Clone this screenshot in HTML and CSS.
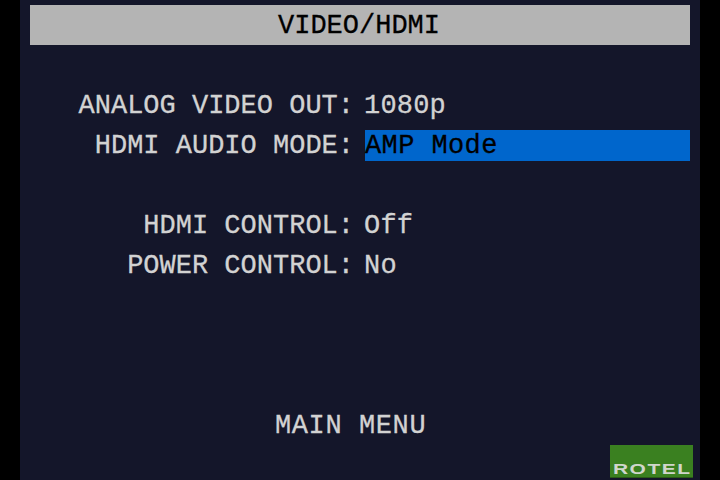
FILE: index.html
```html
<!DOCTYPE html>
<html lang="en">
<head>
    <meta charset="UTF-8">
    <title>VIDEO/HDMI</title>
    <link rel="stylesheet" href="styles.css">
</head>
<body>
    <div class="screen">
        <div class="title">VIDEO/HDMI</div>
        <div class="menu">
            <div class="row"><span class="label">ANALOG VIDEO OUT:</span><span class="value">1080p</span></div>
            <div class="row"><span class="label">HDMI AUDIO MODE:</span><span class="value selected">AMP Mode</span></div>
            <div class="row"></div>
            <div class="row"><span class="label">HDMI CONTROL:</span><span class="value">Off</span></div>
            <div class="row"><span class="label">POWER CONTROL:</span><span class="value">No</span></div>
        </div>
        <div class="main-menu">MAIN MENU</div>
        <div class="logo"><span class="logo-text">ROTEL</span></div>
    </div>
</body>
</html>
```
FILE: styles.css
```css
html, body {
    margin: 0;
    height: 100%;
    background: #000;
    overflow: hidden;
}

.screen {
    position: relative;
    box-sizing: border-box;
    width: 680px;
    height: 480px;
    margin-left: 20px;
    padding: 5px 10px 0;
    background: #14162a;
    color: #d2d2d2;
    font-family: "Liberation Mono", monospace;
    font-size: 27px;
    line-height: 42px;
    -webkit-text-stroke: 0.3px currentColor;
}

.title {
    height: 40px;
    padding-right: 2px;
    background: #b4b4b4;
    color: #000;
    text-align: center;
}

.menu {
    margin-top: 40px;
}

.row {
    display: grid;
    grid-template-columns: 324px 1fr;
    column-gap: 10px;
    height: 40px;
    white-space: nowrap;
}

.label {
    text-align: right;
}

.value {
    letter-spacing: 0.2px;
}

.selected {
    height: 31px;
    margin-top: 5px;
    margin-left: 1px;
    background: #0066cc;
    color: #000;
    line-height: 32px;
    letter-spacing: 0.4px;
}

.main-menu {
    margin-top: 120px;
    padding-left: 245px;
    letter-spacing: 0.6px;
}

.logo {
    position: absolute;
    left: 590px;
    top: 445px;
    display: flex;
    justify-content: center;
    align-items: flex-end;
    width: 83px;
    height: 33px;
    padding-left: 2px;
    background: #3a8020;
    border-bottom: 1px solid #2a5a18;
    box-sizing: border-box;
}

.logo-text {
    font-family: "Liberation Sans", sans-serif;
    font-size: 14px;
    font-weight: bold;
    line-height: 16px;
    letter-spacing: 1px;
    -webkit-text-stroke: 0;
    color: #d0d6cc;
    transform: scaleX(1.5);
}
```
